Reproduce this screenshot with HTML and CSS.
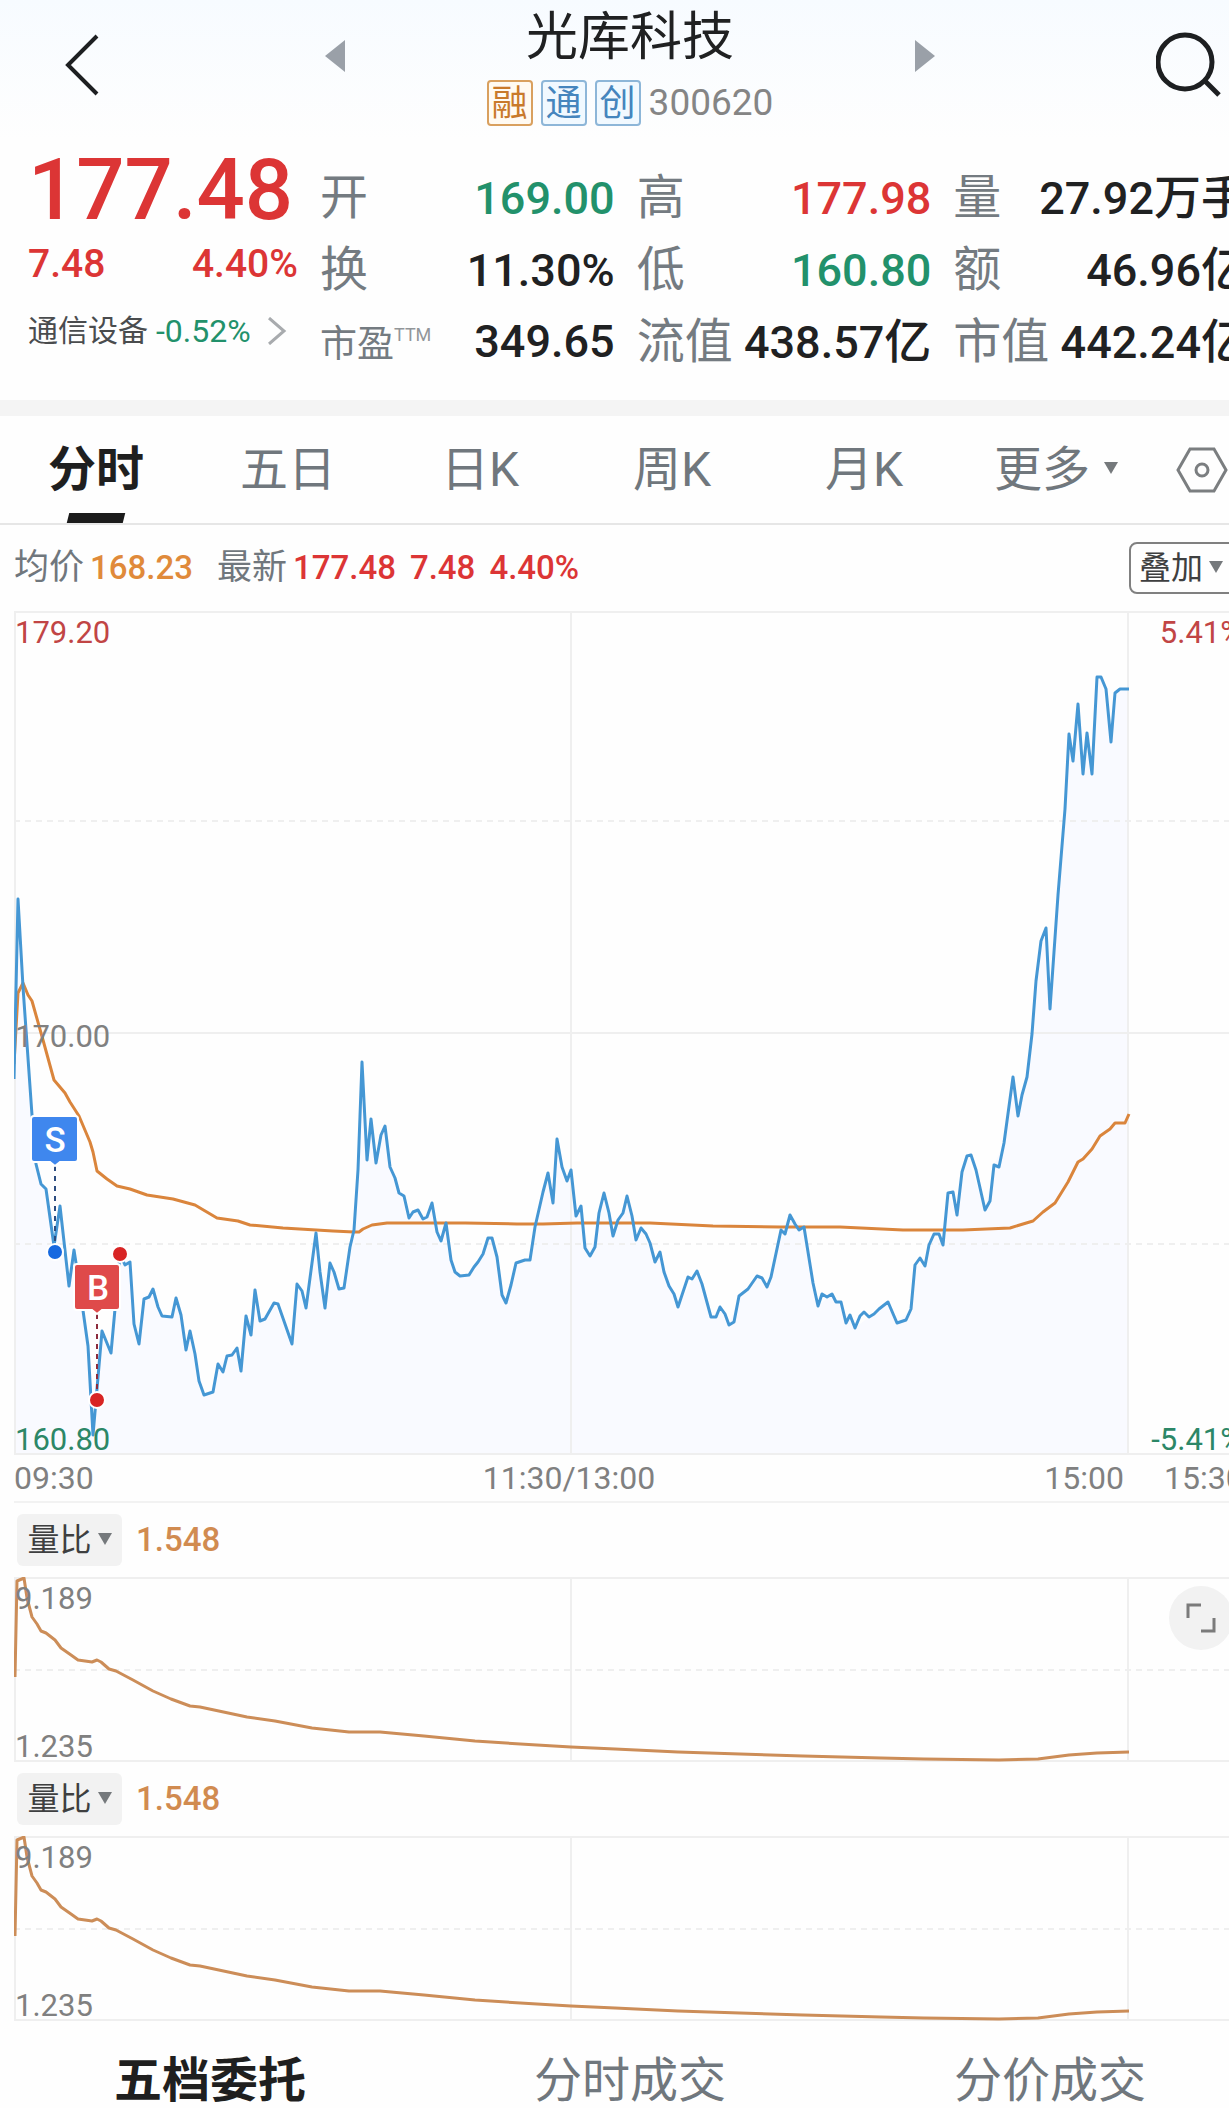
FILE: index.html
```html
<!DOCTYPE html>
<html lang="zh-CN">

<head>
  <meta charset="UTF-8">
  <meta name="viewport" content="width=device-width, initial-scale=1.0">
  <title>光库科技 300620</title>

  <link rel="stylesheet" href="styles.css">
</head>

<body>
  <div class="page">
    <header class="top">
      <button class="icon-btn" aria-label="返回">
        <svg width="68" height="68" viewBox="0 0 68 68"><path d="M49 5 20 34 49 63" fill="none" stroke="#1d1f21" stroke-width="4"/></svg>
      </button>
      <button class="step-btn" aria-label="上一只">
        <svg width="20" height="32" viewBox="0 0 20 32"><path d="M20 0v32L0 16z" fill="#9aa0a8"/></svg>
      </button>
      <div class="name">
        <h1>光库科技</h1>
        <div class="code">
          <span class="tag tag-orange">融</span>
          <span class="tag">通</span>
          <span class="tag">创</span>
          <span>300620</span>
        </div>
      </div>
      <button class="step-btn" aria-label="下一只">
        <svg width="20" height="32" viewBox="0 0 20 32"><path d="M0 0v32l20-16z" fill="#9aa0a8"/></svg>
      </button>
      <button class="icon-btn" aria-label="搜索">
        <svg width="68" height="68" viewBox="0 0 68 68"><g fill="none" stroke="#1d1f21" stroke-width="5"><circle cx="29" cy="31" r="27"/><path d="M49 50 63 64"/></g></svg>
      </button>
    </header>

    <section class="quote">
      <div class="price">
        <strong class="up">177.48</strong>
        <div class="change up"><span>7.48</span><span>4.40%</span></div>
        <a class="sector" href="#">
          通信设备 <span class="down">-0.52%</span>
          <svg width="20" height="28" viewBox="0 0 20 28"><path d="M2 1 17 14 2 27" fill="none" stroke="#a8abae" stroke-width="3"/></svg>
        </a>
      </div>
      <dl class="stats">
        <div><dt>开</dt><dd class="down">169.00</dd></div>
        <div><dt>高</dt><dd class="up">177.98</dd></div>
        <div><dt>量</dt><dd>27.92<span>万手</span></dd></div>
        <div><dt>换</dt><dd>11.30%</dd></div>
        <div><dt>低</dt><dd class="down">160.80</dd></div>
        <div><dt>额</dt><dd>46.96<span>亿</span></dd></div>
        <div><dt class="small">市盈<sup>TTM</sup></dt><dd>349.65</dd></div>
        <div><dt>流值</dt><dd>438.57<span>亿</span></dd></div>
        <div><dt>市值</dt><dd>442.24<span>亿</span></dd></div>
      </dl>
    </section>

    <nav class="tabs">
      <button class="active">分时</button>
      <button>五日</button>
      <button>日K</button>
      <button>周K</button>
      <button>月K</button>
      <button>更多<i class="caret"></i></button>
      <button class="settings" aria-label="设置">
        <svg width="52" height="46" viewBox="0 0 52 46"><g fill="none" stroke="#7b7e80" stroke-width="3"><path d="M14 2h24l12 21-12 21H14L2 23z"/><circle cx="26" cy="23" r="6"/></g></svg>
      </button>
    </nav>

    <div class="legend">
      <span class="label">均价</span><b class="avg">168.23</b>
      <span class="label latest">最新</span><b class="up">177.48</b><b class="up">7.48</b><b class="up">4.40%</b>
      <button class="overlay">叠加<i class="caret"></i></button>
    </div>

    <section class="chart">
      <svg viewBox="14 611 1232 844">
        <path class="area" d="M14 1079 18 899 23 987 32 1115 36 1164 41 1184 46 1189 54 1246 60 1206 69 1286 74 1250 80 1289 88 1346 93 1435 102 1331 111 1353 115 1309 120 1254 130 1262 134 1324 139 1344 144 1299 153 1289 162 1316 172 1317 176 1298 186 1350 190 1331 204 1395 213 1392 218 1364 237 1348 241 1371 246 1316 251 1335 255 1290 260 1321 274 1303 292 1344 297 1284 306 1308 316 1233 325 1308 330 1263 339 1289 344 1288 354 1230 362 1062 367 1160 371 1119 376 1163 385 1126 390 1167 409 1218 418 1210 423 1219 432 1203 441 1241 446 1223 451 1260 460 1276 469 1275 483 1254 488 1238 492 1238 506 1303 516 1263 530 1260 548 1173 553 1203 557 1139 567 1181 571 1170 576 1216 581 1206 590 1256 604 1193 613 1236 627 1196 636 1240 641 1228 655 1262 660 1252 678 1307 697 1271 711 1317 720 1307 729 1325 739 1296 757 1276 767 1287 781 1230 790 1215 804 1227 818 1306 832 1294 855 1328 888 1302 897 1323 911 1309 915 1265 925 1266 934 1234 943 1245 948 1193 957 1215 967 1156 985 1210 994 1165 1004 1143 1013 1077 1018 1116 1027 1077 1036 981 1046 928 1050 1009 1069 734 1073 761 1078 704 1083 774 1087 733 1092 774 1097 677 1101 677 1111 742 1115 693 1129 689V1455H14z"/>
        <path class="grid" d="M14 612H1246M14 1033H1246M14 1454H1246M15 611V1455M571 611V1455M1128 611V1455"/>
        <path class="grid dashed" d="M14 821H1246M14 1244H1246"/>
        <polyline class="line avg-line" points="14,1064 18,993 23,983 28,995 32,1001 43,1040 54,1080 65,1093 70,1102 79,1116 90,1142 93,1152 97,1171 107,1179 117,1186 130,1189 147,1195 173,1199 195,1205 217,1218 238,1221 250,1225 283,1228 333,1231 354,1232 359,1232 363,1229 372,1225 387,1223 400,1223 465,1223 517,1224 543,1224 577,1223 650,1223 713,1226 780,1227 840,1227 903,1230 963,1230 1010,1228 1023,1224 1033,1221 1043,1212 1055,1203 1068,1182 1078,1162 1083,1159 1092,1149 1100,1136 1110,1129 1115,1123 1125,1123 1129,1114"/>
        <polyline class="line price-line" points="14,1079 18,899 23,987 32,1115 36,1164 41,1184 46,1189 54,1246 60,1206 69,1286 74,1250 80,1289 88,1346 93,1435 102,1331 111,1353 115,1309 120,1254 125,1265 130,1262 134,1324 139,1344 144,1299 149,1297 153,1289 158,1307 162,1316 172,1317 176,1298 181,1315 186,1350 190,1331 195,1354 199,1381 204,1395 213,1392 218,1364 223,1372 227,1356 232,1355 237,1348 241,1371 246,1316 251,1335 255,1290 260,1321 265,1319 274,1303 278,1304 292,1344 297,1284 302,1291 306,1308 316,1233 320,1272 325,1308 330,1263 334,1272 339,1289 344,1288 350,1247 354,1230 358,1170 362,1062 367,1160 371,1119 376,1163 381,1135 385,1126 390,1167 395,1178 399,1193 404,1196 409,1218 413,1212 418,1210 423,1219 427,1217 432,1203 437,1232 441,1241 446,1223 451,1260 455,1272 460,1276 469,1275 474,1267 478,1262 483,1254 488,1238 492,1238 497,1257 502,1295 506,1303 511,1285 516,1263 525,1260 530,1260 535,1227 543,1192 548,1173 553,1203 557,1139 562,1167 567,1181 571,1170 576,1216 581,1206 585,1248 590,1256 595,1247 599,1213 604,1193 609,1213 613,1236 618,1220 623,1213 627,1196 632,1216 636,1240 641,1228 646,1234 650,1243 655,1262 660,1252 664,1272 669,1286 674,1294 678,1307 688,1277 692,1279 697,1271 702,1284 711,1317 716,1317 720,1307 725,1314 729,1325 734,1322 739,1296 748,1289 757,1276 762,1278 767,1287 771,1277 781,1230 785,1234 790,1215 795,1224 799,1230 804,1227 813,1283 818,1306 822,1294 827,1297 832,1294 836,1302 841,1302 846,1323 850,1315 855,1328 860,1316 864,1312 869,1317 874,1314 879,1309 888,1302 897,1323 906,1320 911,1309 915,1265 920,1258 925,1266 929,1245 934,1234 939,1234 943,1245 948,1193 953,1192 957,1215 962,1172 967,1156 971,1155 976,1170 985,1210 990,1201 994,1165 999,1167 1004,1143 1013,1077 1018,1116 1022,1095 1027,1077 1032,1034 1036,981 1041,941 1046,928 1050,1009 1058,895 1065,809 1069,734 1073,761 1078,704 1083,774 1087,733 1092,774 1097,677 1101,677 1106,689 1111,742 1115,693 1120,689 1129,689"/>
        <!-- sell / buy markers -->
        <g class="marker sell">
          <path class="stem" d="M55 1166V1246"/>
          <circle cx="55" cy="1252" r="8"/>
          <path class="flag" d="M34 1116H75a3 3 0 0 1 3 3V1159a3 3 0 0 1-3 3H60L55 1166 50 1162H34a3 3 0 0 1-3-3V1119a3 3 0 0 1 3-3z"/>
          <text x="55" y="1152">S</text>
        </g>
        <g class="marker buy">
          <path class="stem" d="M97 1314V1394"/>
          <circle cx="97" cy="1400" r="8"/>
          <circle cx="120" cy="1254" r="8"/>
          <path class="flag" d="M77 1264H117a3 3 0 0 1 3 3V1307a3 3 0 0 1-3 3H102L97 1314 92 1310H77a3 3 0 0 1-3-3V1267a3 3 0 0 1 3-3z"/>
          <text x="98" y="1300">B</text>
        </g>
      </svg>
      <div class="scale">
        <div class="up"><span>179.20</span><span>5.41%</span></div>
        <div><span>170.00</span></div>
        <div class="down"><span>160.80</span><span>-5.41%</span></div>
      </div>
    </section>
    <div class="times">
      <span>09:30</span>
      <span class="noon">11:30/13:00</span>
      <span class="close">15:00</span>
      <span class="after">15:30</span>
    </div>

    <section class="panel">
      <div class="panel-head">
        <button>量比<i class="caret"></i></button><b>1.548</b>
      </div>
      <div class="chart">
        <svg viewBox="14 0 1232 185">
          <g id="ratio">
            <path class="grid" d="M14 1H1246M14 184H1246M15 0V185M571 0V185M1128 0V185"/>
            <path class="grid dashed" d="M14 93H1246"/>
            <polyline class="line ratio-line" points="15,100 17,4 24,1 27,21 32,40 37,47 41,54 46,56 55,63 61,71 71,78 78,83 92,85 97,83 101,85 109,92 116,94 133,103 153,114 171,122 190,129 200,130 247,140 275,144 312,151 349,155 380,155 424,159 475,164 537,168 571,170 615,172 678,175 740,177 803,179 881,181 924,182 999,183 1038,182 1069,178 1097,176 1129,175"/>
          </g>
        </svg>
        <div class="scale">
          <div><span>9.189</span></div>
          <div><span>1.235</span></div>
        </div>
        <button class="expand" aria-label="全屏">
          <svg width="30" height="30" viewBox="0 0 30 30"><path d="M2 15V2H15M28 15V28H15" fill="none" stroke="#7b7b7b" stroke-width="3"/></svg>
        </button>
      </div>
    </section>

    <section class="panel">
      <div class="panel-head">
        <button>量比<i class="caret"></i></button><b>1.548</b>
      </div>
      <div class="chart">
        <svg viewBox="14 0 1232 185"><use href="#ratio"/></svg>
        <div class="scale">
          <div><span>9.189</span></div>
          <div><span>1.235</span></div>
        </div>
      </div>
    </section>

    <nav class="bottom-tabs">
      <button class="active">五档委托</button>
      <button>分时成交</button>
      <button>分价成交</button>
    </nav>
  </div>
</body>

</html>
```

FILE: styles.css
```css
* {
  box-sizing: border-box;
}

body {
  background: #fefefe;
  color: #202122;
  font-family: Roboto, "Noto Sans CJK SC", sans-serif;
  line-height: 1.2;
  margin: 0;
  overflow-x: hidden;
}

/* the sheet is a little wider than the window and runs off its right side */
.page {
  width: calc(100% + 31px);
}

button {
  background: none;
  border: 0;
  color: inherit;
  cursor: pointer;
  font: inherit;
  padding: 0;
}

svg {
  display: block;
}

h1,
dl,
dd {
  margin: 0;
}

.up {
  color: #dc3535;
}

.down {
  color: #22916b;
}

.caret {
  border: 7px solid transparent;
  border-bottom: 0;
  border-top: 12px solid #75797c;
  display: inline-block;
  margin-left: 6px;
  vertical-align: 6px;
}

/* header */
.top {
  align-items: flex-start;
  background: linear-gradient(#f7fbff, #fefefe);
  display: flex;
  height: 140px;
  padding: 0 36px 0 48px;
}

.icon-btn {
  margin-top: 31px;
}

.step-btn {
  margin-top: 40px;
}

.top .icon-btn:first-child {
  margin-right: 209px;
}

.top .icon-btn:last-child {
  margin-left: 221px;
}

.name {
  flex: 1;
  text-align: center;
}

h1 {
  font-size: 52px;
  font-weight: 400;
  line-height: 76px;
}

.code {
  align-items: center;
  color: #858585;
  display: flex;
  font-size: 37px;
  gap: 8px;
  justify-content: center;
  line-height: 46px;
  margin-top: 4px;
}

.tag {
  background: #f1f9ff;
  border: 2px solid #8db6d8;
  border-radius: 4px;
  color: #4585bd;
  font-size: 36px;
  height: 46px;
  line-height: 44px;
  text-align: center;
  width: 46px;
}

.tag-orange {
  background: #fffaf2;
  border-color: #d9a05f;
  color: #c9792a;
}

/* quote */
.quote {
  border-bottom: 16px solid #f4f4f4;
  column-gap: 22px;
  display: grid;
  grid-template-columns: 270px 1fr;
  height: 276px;
  padding: 0 12px 0 28px;
}

.price strong {
  display: block;
  font-size: 85px;
  font-weight: 500;
  line-height: 100px;
}

.change {
  display: flex;
  font-size: 39px;
  font-weight: 500;
  justify-content: space-between;
  line-height: 48px;
}

.sector {
  align-items: center;
  color: #4a4c4e;
  display: flex;
  font-size: 30px;
  gap: 8px;
  line-height: 48px;
  margin-top: 19px;
  text-decoration: none;
}

.sector span {
  font-size: 32px;
}

.sector svg {
  margin-left: 8px;
}

.stats {
  align-content: start;
  column-gap: 22px;
  display: grid;
  grid-auto-rows: 72px;
  grid-template-columns: repeat(3, 1fr);
  line-height: 72px;
  padding-top: 22px;
}

.stats div {
  align-items: baseline;
  display: flex;
  justify-content: space-between;
  white-space: nowrap;
}

.stats dt {
  color: #747b81;
  font-size: 48px;
}

.stats dt.small {
  font-size: 37px;
}

.stats sup {
  color: #929699;
  font-size: 18px;
  line-height: 0;
  vertical-align: 16px;
}

.stats dd {
  font-size: 45px;
  font-weight: 500;
}

.stats dd span {
  font-size: 47px;
  line-height: 0;
}

/* period tabs */
.tabs {
  border-bottom: 2px solid #e6e6e6;
  color: #70777d;
  display: flex;
  font-size: 48px;
  height: 109px;
}

.tabs button {
  flex: 1;
}

.tabs .active,
.bottom-tabs .active {
  color: #1f1f1f;
  font-weight: 700;
}

.tabs .active {
  position: relative;
}

.tabs .active::after {
  background: #1b1b1b;
  bottom: 0;
  content: "";
  height: 10px;
  left: 50%;
  position: absolute;
  transform: translateX(-50%) skewX(-14deg);
  width: 56px;
}

.tabs .caret {
  margin-left: 14px;
  vertical-align: 12px;
}

.tabs .settings {
  flex: 0 0 108px;
  padding-left: 24px;
}

.legend {
  align-items: center;
  display: flex;
  font-size: 33px;
  height: 86px;
  padding: 0 14px;
}

.legend b {
  font-weight: 500;
  margin-right: 14px;
}

.legend .label {
  color: #70777d;
  font-size: 35px;
  margin-right: 6px;
}

.legend .latest {
  margin-left: 10px;
}

.legend .avg {
  color: #e08a3a;
}

.overlay {
  border: 2px solid #808080;
  border-radius: 8px;
  color: #3e3f40;
  font-size: 32px;
  height: 52px;
  margin-left: auto;
  padding-left: 8px;
  text-align: left;
  width: 117px;
}

/* charts */
.chart {
  margin: 0 14px;
  position: relative;
}

.chart > svg {
  width: 100%;
}

.grid {
  fill: none;
  stroke: #efefef;
  stroke-width: 2;
}

.dashed {
  stroke-dasharray: 6 5;
}

.area {
  fill: #f9faff;
}

.line {
  fill: none;
  stroke-linejoin: round;
  stroke-width: 3;
}

.price-line {
  stroke: #4597d4;
}

.avg-line {
  stroke: #da853c;
}

.ratio-line {
  stroke: #cc8d58;
}

.marker circle,
.marker .flag {
  stroke: #fff;
  stroke-width: 2;
}

.marker text {
  fill: #fff;
  font-size: 35px;
  font-weight: 500;
  text-anchor: middle;
}

.stem {
  stroke-dasharray: 5 5;
  stroke-width: 2;
}

.sell .stem {
  stroke: #2c4c80;
}

.sell circle {
  fill: #1769e0;
}

.sell .flag {
  fill: #3f87ee;
}

.buy .stem {
  stroke: #8c2b3c;
}

.buy circle {
  fill: #d82424;
}

.buy .flag {
  fill: #df4a4a;
}

.scale {
  color: #808080;
  display: flex;
  flex-direction: column;
  font-size: 31px;
  inset: 2px 0 -5px;
  justify-content: space-between;
  line-height: 40px;
  padding: 0 3px 0 1px;
  position: absolute;
}

.scale div {
  display: flex;
  justify-content: space-between;
}

.scale .up {
  color: #c14545;
}

.scale .down {
  color: #2c8767;
}

.times {
  border-bottom: 2px solid #f2f2f2;
  color: #808080;
  display: grid;
  font-size: 32px;
  grid-template-columns: 1fr 1fr 1fr 122px;
  height: 48px;
  line-height: 46px;
  margin: 0 14px;
}

.times .noon {
  text-align: center;
}

.times .close {
  text-align: right;
}

.times .after {
  padding-left: 40px;
}

/* indicator panels */
.panel-head {
  align-items: center;
  display: flex;
  height: 74px;
  padding: 0 17px;
}

.panel-head button {
  background: #f2f2f2;
  border-radius: 6px;
  color: #3e3f40;
  font-size: 32px;
  height: 52px;
  width: 105px;
}

.panel-head b {
  color: #d18b50;
  font-size: 33px;
  font-weight: 500;
  margin-left: 14px;
}

.expand {
  align-items: center;
  background: #f2f2f2;
  border-radius: 50%;
  display: flex;
  height: 64px;
  justify-content: center;
  position: absolute;
  right: 13px;
  top: 9px;
  width: 64px;
}

.bottom-tabs {
  color: #70777d;
  display: grid;
  font-size: 48px;
  grid-template-columns: repeat(3, 1fr);
  height: 87px;
  line-height: 54px;
  padding-top: 33px;
}
```
